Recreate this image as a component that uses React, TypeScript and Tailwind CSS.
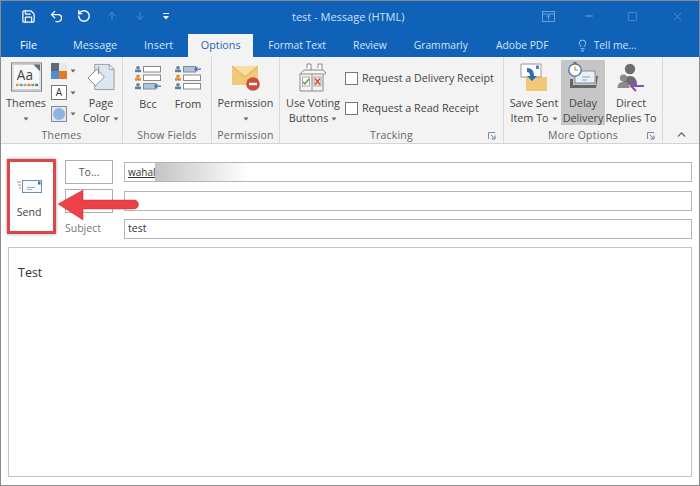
import React from "react";
import { Save, Undo2, RotateCcw, ArrowUp, ArrowDown, Lightbulb, ChevronUp, X, Minus, Square } from "lucide-react";

const Caret = ({ className = "" }: { className?: string }) => (
  <svg width="6" height="4" viewBox="0 0 6 4" className={"inline-block " + className}><path d="M0.5 0.5h5L3 3.5z" fill="#666" /></svg>
);
const Launcher = () => (
  <svg width="8" height="8" viewBox="0 0 8 8"><path d="M0.5 7V0.5H7" fill="none" stroke="#888" /><path d="M3 3l3.5 3.5M7 3.5V7H3.5" fill="none" stroke="#5a7fa8" /></svg>
);
const Group = ({ w, label, launcher, children }: { w: string; label: string; launcher?: boolean; children: React.ReactNode }) => (
  <div className={"relative flex flex-col shrink-0 h-full border-r border-[#d8d8d8] " + w}>
    <div className="flex h-[71px] pt-[3px]">{children}</div>
    <div className="flex-1 flex items-center justify-center text-[10.5px] leading-none text-[#666] tracking-[0.2px]">{label}</div>
    {launcher && <div className="absolute right-[7px] bottom-[3px]"><Launcher /></div>}
  </div>
);
const Big = ({ w, icon, l1, l2, caret, cls = "" }: { w: string; icon: React.ReactNode; l1: string; l2?: string; caret?: boolean; cls?: string }) => (
  <div className={"flex flex-col items-center shrink-0 h-[65px] " + w + " " + cls}>
    <div className="h-[35px] flex items-center justify-center">{icon}</div>
    <div className="text-[10.8px] leading-[15px] text-[#444] whitespace-nowrap mt-[1px] text-center">{l1}</div>
    <div className="text-[10.8px] leading-[15px] text-[#444] whitespace-nowrap">{l2}{caret && <Caret className={l2 ? "ml-[3px] align-middle" : "align-middle"} />}</div>
  </div>
);

const ThemesIcon = () => (
  <svg width="31" height="30" viewBox="0 0 32 30">
    <rect x="0.5" y="0.5" width="31" height="29" fill="#fff" stroke="#7a7a7a" />
    <rect x="2" y="2" width="28" height="26" fill="#f7f7f7" stroke="#c9c9c9" />
    <path d="M23 2h7v7z" fill="#5c6b80" />
    <text x="6" y="18" fontSize="14" fill="#444" fontFamily="Open Sans, sans-serif">Aa</text>
    {["#e0a030", "#5b9bd5", "#a5a5a5", "#ed7d31", "#70ad47", "#4472c4"].map((c, i) => <rect key={c} x={5 + i * 4} y="22" width="3" height="2.5" fill={c} />)}
  </svg>
);
const PageColor = () => (
  <svg width="29" height="28" viewBox="0 0 30 28">
    <path d="M8 1h15l5 5v21H8z" fill="#dbe6f3" stroke="#9a9a9a" />
    <path d="M23 1v5h5z" fill="#fff" stroke="#9a9a9a" />
    <path d="M1 15l9-9 8 8-9 9z" fill="#fff" stroke="#888" />
    <path d="M12 3v8" stroke="#888" />
  </svg>
);
const Rows = ({ arrowRow }: { arrowRow: number }) => (
  <svg width="28" height="26" viewBox="0 0 28 26">
    {[0, 1, 2].map((r) => {
      const y = 1 + r * 8.5;
      const c = r === 1 ? "#e08a2c" : "#5f7fa8";
      return (
        <g key={r}>
          <circle cx="4" cy={y + 1.8} r="1.8" fill={c} />
          <rect x="1" y={y + 3.6} width="6" height="2.6" fill={c} />
          <rect x="9.5" y={y + 0.5} width={r === arrowRow ? 12 : 17} height="5.5" fill={r === arrowRow ? "#a9c4e4" : "#fff"} stroke="#8a8a8a" />
          {r === arrowRow && <path d={`M27 ${y + 3.2}H21M23.5 ${y + 1}L21 ${y + 3.2}l2.5 2.2`} fill="none" stroke="#3f6fa8" strokeWidth="1.2" />}
        </g>
      );
    })}
  </svg>
);
const PermissionIcon = () => (
  <svg width="30" height="27" viewBox="0 0 30 27">
    <rect x="1" y="2" width="26" height="19" fill="#f0c878" />
    <path d="M1 2l13 11L27 2" fill="#f7dca4" stroke="#dca94f" />
    <circle cx="22" cy="20" r="6.8" fill="#c94f36" />
    <rect x="18" y="18.8" width="8" height="2.4" fill="#fff" />
  </svg>
);
const VotingIcon = () => (
  <svg width="28" height="29" viewBox="0 0 28 29">
    <path d="M8 5V1h4v8M19 5V1h4v8" fill="#fff" stroke="#888" />
    <path d="M1 11l4-4h19l3 3-3 2v16H1z" fill="#f4f4f4" stroke="#888" />
    <path d="M13 11v17M1 11h23" stroke="#888" />
    <rect x="3.5" y="14" width="7" height="9" fill="#fff" stroke="#aaa" />
    <path d="M4 19l2 2 4-5" fill="none" stroke="#4e9a57" strokeWidth="1.4" />
    <rect x="15" y="14" width="7" height="9" fill="#f9e6e2" stroke="#aaa" />
    <path d="M16 15.5l5 6M21 15.5l-5 6" stroke="#cf4c3c" strokeWidth="1.4" />
  </svg>
);
const SaveSent = () => (
  <svg width="28" height="29" viewBox="0 0 28 29">
    <path d="M6 12h6l2 2h13v14H6z" fill="#f0c878" />
    <path d="M1 1h20v13H1z" fill="#fff" stroke="#999" />
    <rect x="16" y="2.5" width="3" height="3.5" fill="#5f7fa8" />
    <path d="M7 5c5 0 7 3 7 8h3l-5 5-5-5h3c0-3-1-4-3-4z" fill="#2f6fb0" />
  </svg>
);
const DelayIcon = () => (
  <svg width="32" height="30" viewBox="0 0 32 30">
    <rect x="8" y="9" width="20" height="12" fill="#e9f0f8" stroke="#7f8c9b" />
    <path d="M3 17v9h26l2-12h-2v9H6v-6z" fill="#666" />
    <circle cx="8" cy="8" r="6.2" fill="#fff" stroke="#3f6f9f" strokeWidth="1.3" />
    <path d="M8 4.5V8h3" fill="none" stroke="#e08a2c" strokeWidth="1.2" />
    <rect x="6.5" y="0" width="3" height="1.6" fill="#3f6f9f" />
    <path d="M15 15h8M15 18h5" stroke="#8aa3bf" />
  </svg>
);
const DirectIcon = () => (
  <svg width="28" height="29" viewBox="0 0 28 29">
    <circle cx="13" cy="6" r="5.2" fill="#6d6d6d" />
    <path d="M6 22c0-5 2-9 7-9s7 4 7 9z" fill="#6d6d6d" />
    <circle cx="6.5" cy="15" r="3.6" fill="#8a8a8a" />
    <path d="M0.5 25c0-4 2-6 6-6s6 2 6 6z" fill="#8a8a8a" />
    <path d="M27 23H14M19 18l-5 5 5 5" fill="none" stroke="#8d4fb5" strokeWidth="2" />
  </svg>
);
const SendIcon = () => (
  <svg width="25" height="15" viewBox="0 0 25 15">
    <rect x="5.5" y="1.5" width="19" height="12" fill="#f7fafd" stroke="#6f8fae" />
    <rect x="21" y="2.5" width="2.5" height="3" fill="#3d6ea5" />
    <path d="M10 8.5h8M10 10.5h5" stroke="#8c9bab" strokeWidth="0.8" />
    <path d="M0 3h4M1 6h3M2 9h2" stroke="#7a7a7a" strokeWidth="0.8" />
  </svg>
);

const tabs = [
  ["File", "ml-[19px]", "text-white"],
  ["Message", "ml-[36px]", "text-[#d5e5f5]"],
  ["Insert", "ml-[27px]", "text-[#d5e5f5]"],
];
const tabs2 = [
  ["Format Text", "ml-[15px]"],
  ["Review", "ml-[27px]"],
  ["Grammarly", "ml-[27px]"],
  ["Adobe PDF", "ml-[28px]"],
];

export default function App() {
  return (
    <div className="relative w-[700px] h-[486px] overflow-hidden bg-white border border-[#8a8a8a] font-['Open_Sans',sans-serif]">
      {/* Title bar */}
      <div className="relative h-[33px] bg-[#0f62b8] flex items-center text-white">
        <Save size={15} strokeWidth={2} className="ml-[20px] mt-[-3px]" />
        <Undo2 size={15} strokeWidth={2} className="ml-[13px] mt-[-3px]" />
        <RotateCcw size={14} strokeWidth={2.4} className="ml-[13px] mt-[-3px]" />
        <ArrowUp size={12} strokeWidth={2} className="ml-[15px] mt-[-3px] text-[#4f8dcf]" />
        <ArrowDown size={12} strokeWidth={2} className="ml-[16px] mt-[-3px] text-[#4f8dcf]" />
        <svg width="6" height="7" viewBox="0 0 6 7" className="ml-[17px] mt-[-3px]"><path d="M0 0h6v1H0zM0 3h6L3 6.5z" fill="#fff" /></svg>
        <div className="ml-[123px] mt-[-3px] text-[11px] leading-none text-[#cfe0f2] whitespace-nowrap">test - Message (HTML)</div>
        <div className="ml-auto flex items-center text-[#6ea3da] mt-[-3px]">
          <svg width="13" height="11" viewBox="0 0 13 11" className="mr-[28px]"><rect x="0.5" y="0.5" width="12" height="10" fill="none" stroke="currentColor" /><path d="M0.5 3h12M6.5 9V4.5M4.5 6l2-2 2 2" fill="none" stroke="currentColor" /></svg>
          <Minus size={12} className="mr-[32px]" />
          <Square size={11} strokeWidth={1.3} className="mr-[33px]" />
          <X size={13} strokeWidth={1.3} className="mr-[15px]" />
        </div>
      </div>
      {/* Tabs */}
      <div className="h-[23px] bg-[#0f62b8] flex items-center text-[10.8px] leading-none">
        {tabs.map(([t, m, c]) => <span key={t} className={m + " " + c + " whitespace-nowrap pb-[1px]"}>{t}</span>)}
        <span className="ml-[15px] w-[65px] h-full bg-[#f3f3f3] text-[#1f63ad] flex items-center justify-center">Options</span>
        {tabs2.map(([t, m]) => <span key={t} className={m + " text-[10.3px] text-[#d5e5f5] whitespace-nowrap pb-[1px]"}>{t}</span>)}
        <span className="ml-[27px] flex items-center text-[10.3px] text-[#d5e5f5] whitespace-nowrap pb-[1px]"><Lightbulb size={13} strokeWidth={1.4} className="mr-[5px]" />Tell me...</span>
      </div>
      {/* Ribbon */}
      <div className="h-[87px] bg-[#f3f3f3] border-b border-[#d4d4d4] flex">
        <Group w="w-[122px]" label="Themes">
          <Big w="w-[48px] ml-[1px]" icon={<ThemesIcon />} l1="Themes" caret />
          <div className="w-[28px] ml-[1px] flex flex-col pt-[3px] gap-[6px] shrink-0">
            <div className="flex items-center gap-[3px]">
              <svg width="16" height="16" viewBox="0 0 16 16"><rect width="8" height="8" fill="#5e6a78" /><rect x="8" width="8" height="8" fill="#e8e8e8" /><rect y="8" width="8" height="8" fill="#4f8fd0" /><rect x="8" y="8" width="8" height="8" fill="#e07b28" /></svg>
              <Caret />
            </div>
            <div className="flex items-center gap-[3px]">
              <div className="w-[16px] h-[15px] border border-[#777] bg-white text-[10px] leading-[13px] text-center text-[#333]">A</div>
              <Caret />
            </div>
            <div className="flex items-center gap-[3px]">
              <div className="w-[16px] h-[16px] bg-[#dfe8f3] border border-[#8a8a8a] flex items-center justify-center"><div className="w-[12px] h-[12px] rounded-full bg-[#8fb4e3]" /></div>
              <Caret />
            </div>
          </div>
          <Big w="w-[44px]" icon={<PageColor />} l1="Page" l2="Color" caret />
        </Group>
        <Group w="w-[89px]" label="Show Fields">
          <Big w="w-[44px] ml-[3px]" icon={<Rows arrowRow={2} />} l1="Bcc" />
          <Big w="w-[36px]" icon={<Rows arrowRow={0} />} l1="From" />
        </Group>
        <Group w="w-[68px]" label="Permission">
          <Big w="w-full" icon={<PermissionIcon />} l1="Permission" caret />
        </Group>
        <Group w="w-[224px]" label="Tracking" launcher>
          <Big w="w-[60px] ml-[3px]" icon={<VotingIcon />} l1="Use Voting" l2="Buttons" caret />
          <div className="flex flex-col gap-[16px] ml-[2px] pt-[11px] text-[10.7px] leading-[14px] text-[#444] whitespace-nowrap">
            <div className="flex items-center gap-[4px]"><div className="w-[13px] h-[13px] bg-white border border-[#777] shrink-0" />Request a Delivery Receipt</div>
            <div className="flex items-center gap-[4px]"><div className="w-[13px] h-[13px] bg-white border border-[#777] shrink-0" />Request a Read Receipt</div>
          </div>
        </Group>
        <Group w="w-[159px]" label="More Options" launcher>
          <Big w="w-[54px] ml-[3px]" icon={<SaveSent />} l1="Save Sent" l2="Item To" caret />
          <Big w="w-[44px] bg-[#c6c6c6]" icon={<DelayIcon />} l1="Delay" l2="Delivery" />
          <Big w="w-[52px]" icon={<DirectIcon />} l1="Direct" l2="Replies To" />
        </Group>
        <div className="flex-1 flex items-end justify-center pb-[2px]"><ChevronUp size={13} strokeWidth={2} className="text-[#555]" /></div>
      </div>
      {/* Compose */}
      <div className="flex pt-[15px] pl-[6px] pr-[7px]">
        <div className="w-[49px] h-[75px] border-[3px] border-[#d9474a] shadow-[0_0_3px_rgba(0,0,0,0.4)] flex flex-col items-center pt-[17px] pr-[5px] shrink-0">
          <SendIcon />
          <div className="text-[10.6px] leading-none text-[#444] mt-[13px]">Send</div>
        </div>
        <div className="flex-1 flex flex-col gap-[5px] ml-[9px] pt-[1px]">
          <div className="flex items-center h-[24px]">
            <div className="w-[48px] h-[24px] border border-[#adadad] bg-white pt-[1px] text-[10.6px] text-[#555] flex items-center justify-center">To...</div>
            <div className="relative ml-[11px] flex-1 h-[20px] border border-[#b5b5b5] flex items-center pl-[3px] text-[10px] overflow-hidden">
              <span className="underline text-[#333]">wahal</span>
              <div className="absolute left-[30px] top-0 bottom-0 w-[94px] bg-gradient-to-r from-[#c4c4c4] to-white" />
            </div>
          </div>
          <div className="flex items-center h-[24px]">
            <div className="w-[48px] h-[24px] border border-[#adadad] bg-white" />
            <div className="ml-[11px] flex-1 h-[20px] border border-[#b5b5b5]" />
          </div>
          <div className="flex items-center h-[20px] mt-[1px]">
            <div className="w-[48px] text-[10.5px] text-[#777]">Subject</div>
            <div className="ml-[11px] flex-1 h-[20px] border border-[#b5b5b5] flex items-center pl-[3px] text-[10.5px] text-[#333]">test</div>
          </div>
        </div>
      </div>
      <div className="mt-[8px] mx-[7px] h-[230px] border border-[#c4c4c4] pt-[19px] pl-[9px] text-[12.5px] leading-none text-[#333]">Test</div>
      {/* Callout arrow */}
      <svg width="82" height="34" viewBox="0 0 82 34" className="absolute left-[56px] top-[187px]">
        <path d="M1 16L26 2v10h51a4.5 4.5 0 0 1 0 9H26v11z" fill="#ec4146" stroke="#c23035" strokeWidth="0.5" />
      </svg>
    </div>
  );
}
